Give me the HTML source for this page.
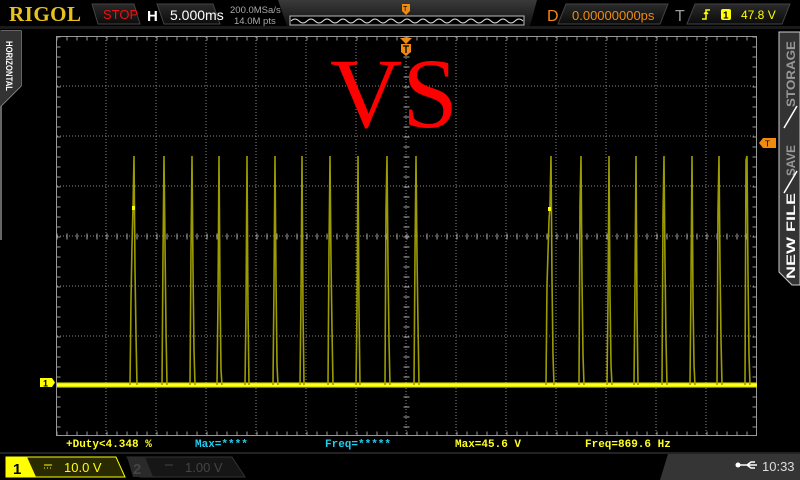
<!DOCTYPE html>
<html><head><meta charset="utf-8"><style>
html,body{margin:0;padding:0;background:#000;width:800px;height:480px;overflow:hidden}
svg{display:block}
.s{font-family:"Liberation Sans",sans-serif}
.m{font-family:"Liberation Mono",monospace;font-size:11px;font-weight:bold}
.sf{font-family:"Liberation Serif",serif}
</style></head><body>
<svg width="800" height="480" viewBox="0 0 800 480" xmlns="http://www.w3.org/2000/svg" font-family="Liberation Sans, sans-serif">
<defs>
<linearGradient id="bx" x1="0" y1="0" x2="0" y2="1"><stop offset="0" stop-color="#2a2a2a"/><stop offset="1" stop-color="#0c0c0c"/></linearGradient>
<linearGradient id="tb" x1="0" y1="0" x2="0" y2="1"><stop offset="0" stop-color="#3a3a3a"/><stop offset="1" stop-color="#111"/></linearGradient>
</defs>
<rect width="800" height="480" fill="#000"/>
<!-- top bar -->
<rect x="0" y="26" width="800" height="3" fill="#1a1a1a"/>
<text class="sf" x="9" y="21" font-weight="bold" font-size="21" fill="#e8c21c" textLength="72">RIGOL</text>
<polygon points="92,4 134,4 140,24 98,24" fill="url(#bx)" stroke="#444"/>
<text x="103" y="19" font-size="13" fill="#f01010">STOP</text>
<text x="147" y="21" font-size="15" font-weight="bold" fill="#fff">H</text>
<polygon points="157,4 213,4 220,24 164,24" fill="url(#bx)" stroke="#444"/>
<text x="170" y="20" font-size="14" fill="#fff">5.000ms</text>
<text x="230" y="13" font-size="9.5" fill="#aaa">200.0MSa/s</text>
<text x="234" y="24" font-size="9.5" fill="#aaa">14.0M pts</text>
<polygon points="278,0 537,0 530,26 287,26" fill="url(#tb)"/>
<rect x="290" y="16" width="234" height="9" fill="#000" stroke="#bbb" stroke-width="1"/>
<path d="M291,21 q4,-4 8,0 t8,0 t8,0 t8,0 t8,0 t8,0 t8,0 t8,0 t8,0 t8,0 t8,0 t8,0 t8,0 t8,0 t8,0 t8,0 t8,0 t8,0 t8,0 t8,0 t8,0 t8,0 t8,0 t8,0 t8,0 t8,0 t8,0 t8,0 t8,0" fill="none" stroke="#ddd" stroke-width="1"/>
<path d="M402,4 h8 v7 l-4,4 l-4,-4z" fill="#f08a10"/>
<text x="403" y="11" font-size="7" fill="#000">T</text>
<text x="547" y="21" font-size="16" fill="#f08a10">D</text>
<polygon points="566,4 668,4 660,24 558,24" fill="url(#bx)" stroke="#444"/>
<text x="572" y="20" font-size="13" fill="#f08a10">0.00000000ps</text>
<text x="675" y="21" font-size="16" fill="#999">T</text>
<polygon points="695,4 790,4 782,24 687,24" fill="url(#bx)" stroke="#444"/>
<path d="M702,19 h4 v-9 h4 M704,14 l2,-2 l2,2" fill="none" stroke="#ff0" stroke-width="1.5"/>
<rect x="721" y="9" width="10" height="11" rx="2" fill="#ff0"/>
<text x="723" y="18.5" font-size="10" font-weight="bold" fill="#000">1</text>
<text x="741" y="19" font-size="12" fill="#ff0">47.8 V</text>

<!-- left tab -->
<path d="M0.5,31 H21 V86 L1,106 V240" fill="none" stroke="#ccc" stroke-width="1"/>
<polygon points="0,31 21,31 21,86 1,106 0,106" fill="#333"/>
<text transform="translate(6,41) rotate(90)" font-size="9" font-weight="bold" fill="#fff" textLength="50" lengthAdjust="spacingAndGlyphs">HORIZONTAL</text>
<!-- right tab -->
<polygon points="779,32 800,32 800,285 792,285 779,272" fill="#333" stroke="#ccc" stroke-width="1"/>
<text transform="translate(795,279) rotate(-90)" font-size="12" font-weight="bold" fill="#fff" textLength="86" lengthAdjust="spacingAndGlyphs">NEW FILE</text>
<text transform="translate(795,176) rotate(-90)" font-size="12" font-weight="bold" fill="#999" textLength="31" lengthAdjust="spacingAndGlyphs">SAVE</text>
<text transform="translate(795,107) rotate(-90)" font-size="12" font-weight="bold" fill="#999" textLength="66" lengthAdjust="spacingAndGlyphs">STORAGE</text>
<path d="M784,193 l13,-22 M784,128 l13,-22" stroke="#fff" stroke-width="1.5"/>

<!-- grid -->
<g stroke="#888" stroke-width="1" stroke-dasharray="1 2">
<path d="M106,37V436M156,37V436M206,37V436M256,37V436M306,37V436M356,37V436M406,37V436M456,37V436M506,37V436M556,37V436M606,37V436M656,37V436M706,37V436"/>
<path d="M57,86H756M57,136H756M57,186H756M57,236H756M57,286H756M57,336H756M57,386H756"/>
</g>
<rect x="56.5" y="36.5" width="700" height="399" fill="none" stroke="#999"/>
<g stroke="#999" stroke-width="4" stroke-dasharray="1 9">
<path d="M56.5,38.5H757M56.5,433.5H757"/>
<path d="M58.5,36.5V436M754.5,36.5V436"/>
</g>
<g stroke="#aaa" stroke-width="6" stroke-dasharray="1 9">
<path d="M406.5,36.5V436"/>
<path d="M56.5,236.5H757" />
</g>

<!-- VS -->
<text class="sf" x="330" y="127" font-size="100" fill="#ff0000">VS</text>
<path d="M400,38 h12 l-6,6z" fill="#f08a10"/>
<path d="M401,44 h10 v8 l-5,4 l-5,-4z" fill="#f08a10"/>
<path d="M403,46 h6 M406,46 v7" stroke="#000" stroke-width="1.3"/>

<!-- baseline -->
<path d="M57,385H757" stroke="#e8e800" stroke-width="5"/>
<path d="M57,385H757" stroke="#ffff20" stroke-width="2"/>
<!-- spikes -->
<g fill="none" stroke="#9c9c00" stroke-width="1.6">
<path d="M130,385 L131,300 L132,245 L133,208 L134,156 L135,270 L136,335 L137,385"/>
<path d="M162,385 L163,255 L164,156 L165,245 L166,330 L167,385"/>
<path d="M190,385 L191,250 L192,156 L193,270 L194,350 L195,385"/>
<path d="M217,385 L218,300 L219,156 L220,290 L221,370 L222,385"/>
<path d="M245,385 L246,310 L247,156 L248,310 L249,385"/>
<path d="M273,385 L274,285 L275,156 L276,280 L277,365 L278,385"/>
<path d="M300,385 L301,300 L302,156 L303,310 L304,385"/>
<path d="M328,385 L329,250 L330,156 L331,260 L332,330 L333,385"/>
<path d="M356,385 L357,310 L358,156 L359,310 L360,385"/>
<path d="M385,385 L386,210 L387,156 L388,265 L389,340 L390,385"/>
<path d="M414,385 L415,255 L416,156 L417,255 L418,325 L419,385"/>
<path d="M546,385 L547,285 L549,220 L550,205 L551,156 L552,280 L553,355 L554,385"/>
<path d="M579,385 L580,205 L581,156 L582,280 L583,355 L584,385"/>
<path d="M607,385 L608,300 L609,156 L610,295 L611,365 L612,385"/>
<path d="M634,385 L635,285 L636,156 L637,310 L638,385"/>
<path d="M662,385 L663,215 L664,156 L665,265 L666,340 L667,385"/>
<path d="M690,385 L691,280 L692,156 L693,300 L694,365 L695,385"/>
<path d="M717,385 L718,210 L719,156 L720,265 L721,340 L722,385"/>
<path d="M745,385 L746,160 L747,156 L748,275 L749,355 L750,385"/>
</g>
<rect x="132" y="206" width="3" height="4" fill="#ff0"/>
<rect x="548" y="207" width="3" height="4" fill="#ff0"/>
<!-- markers -->
<path d="M40,378 h12 l3,4.5 l-3,4.5 h-12z" fill="#ff0"/>
<text x="43" y="386.5" font-size="9" font-weight="bold" fill="#000">1</text>
<path d="M776,138 h-13 l-4,5 l4,5 h13z" fill="#f08a10"/>
<text x="765" y="146.5" font-size="8" fill="#000">T</text>

<!-- measurements -->
<text class="m" x="66" y="447" fill="#ffff20">+Duty&lt;4.348 %</text>
<text class="m" x="195" y="447" fill="#20d0f0">Max=****</text>
<text class="m" x="325" y="447" fill="#20d0f0">Freq=*****</text>
<text class="m" x="455" y="447" fill="#ffff20">Max=45.6 V</text>
<text class="m" x="585" y="447" fill="#ffff20">Freq=869.6 Hz</text>

<!-- bottom bar -->
<rect x="0" y="452" width="800" height="2" fill="#222"/>
<polygon points="668,454 800,454 800,480 660,480" fill="#353535"/>
<polygon points="6,457 116,457 125,477 6,477" fill="#2a2a00" stroke="#ff0" stroke-width="1"/>
<polygon points="6,457 27,457 36,477 6,477" fill="#ff0"/>
<text x="13" y="474" font-size="15" font-weight="bold" fill="#000">1</text>
<path d="M44,465h8 M44,468h1 M47,468h1 M50,468h1" stroke="#ff0" stroke-width="1"/>
<text x="64" y="472" font-size="13" fill="#ff0">10.0 V</text>
<polygon points="127,457 232,457 245,477 140,477" fill="#161616" stroke="#333"/>
<polygon points="127,457 145,457 153,477 133,477" fill="#2a2a2a"/>
<text x="133" y="474" font-size="15" font-weight="bold" fill="#444">2</text>
<path d="M165,465h8" stroke="#444"/>
<text x="185" y="472" font-size="13" fill="#444">1.00 V</text>
<path d="M737,465 h20 M747,465 l4,-3 h4 M747,465 l4,3 h4" fill="none" stroke="#fff" stroke-width="1.5"/>
<circle cx="738" cy="465" r="2.5" fill="#fff"/>
<text x="762" y="471" font-size="13" fill="#ddd">10:33</text>
</svg>
</body></html>
